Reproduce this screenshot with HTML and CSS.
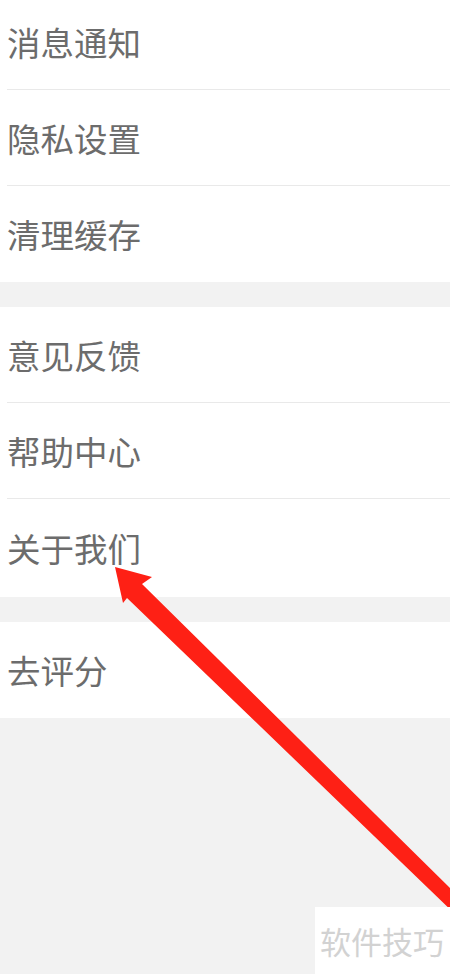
FILE: index.html
```html
<!DOCTYPE html>
<html lang="zh-CN">
<head>
<meta charset="utf-8">
<title>设置</title>
<link rel="stylesheet" href="styles.css">
</head>
<body>
<div class="page">
  <div class="group group-first">
    <div class="row"><span class="label">消息通知</span></div>
    <div class="row"><span class="label">隐私设置</span></div>
    <div class="row"><span class="label">清理缓存</span></div>
  </div>
  <div class="group">
    <div class="row"><span class="label">意见反馈</span></div>
    <div class="row"><span class="label">帮助中心</span></div>
    <div class="row row-tall"><span class="label">关于我们</span></div>
  </div>
  <div class="group">
    <div class="row"><span class="label">去评分</span></div>
  </div>
</div>
<svg class="arrow" width="450" height="974" viewBox="0 0 450 974" xmlns="http://www.w3.org/2000/svg">
  <polygon points="115,567 152,577 142,584 458,896 455,914 127,598 123,603" fill="#fe2015"/>
</svg>
<div class="watermark">软件技巧</div>
</body>
</html>
```
FILE: styles.css
```css
html, body {
  margin: 0;
  padding: 0;
  background: #f2f2f2;
  font-family: "Noto Sans CJK SC", "Noto Sans", sans-serif;
}
.page {
  display: flex;
  flex-direction: column;
  gap: 25px;
  overflow: hidden;
  height: 974px;
}
.group {
  background: #ffffff;
  padding-left: 7px;
  display: flex;
  flex-direction: column;
}
.group-first {
  margin-top: -6px;
}
.row {
  box-sizing: border-box;
  height: 96px;
  display: flex;
  align-items: center;
  border-bottom: 1px solid #e9e9e9;
}
.row-tall {
  height: 98px;
}
.row:last-child {
  border-bottom: none;
}
.label {
  font-size: 33.5px;
  color: #6c6c6c;
  line-height: 1;
}
.arrow {
  position: absolute;
  left: 0;
  top: 0;
}
.watermark {
  position: absolute;
  left: 315px;
  top: 907px;
  width: 135px;
  height: 67px;
  background: #ffffff;
  color: #d2d2d2;
  font-size: 31px;
  line-height: 1;
  display: flex;
  align-items: center;
  padding-left: 5px;
  box-sizing: border-box;
  white-space: nowrap;
}
```
